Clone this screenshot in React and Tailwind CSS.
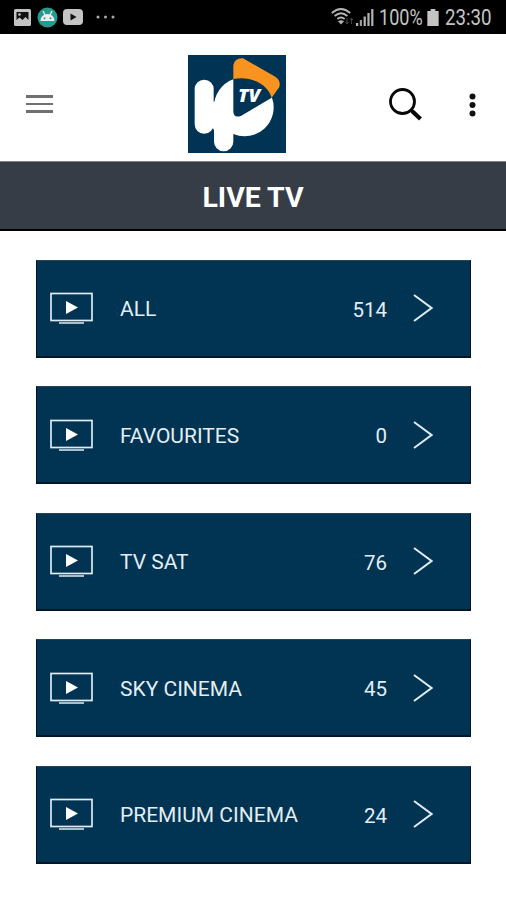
import React from "react";

const categories = [
  { id: 1, name: "ALL", total: 514 },
  { id: 2, name: "FAVOURITES", total: 0 },
  { id: 3, name: "TV SAT", total: 76 },
  { id: 4, name: "SKY CINEMA", total: 45 },
  { id: 5, name: "PREMIUM CINEMA", total: 24 },
];

const StatusBar = () => (
  <div className="flex h-[34px] items-center justify-between bg-black pl-[14px] pr-[14px] text-[#c4c4c4]">
    <div className="flex items-center">
      {/* Picture */}
      <svg width="17" height="17" viewBox="0 0 17 17">
        <rect width="17" height="17" rx="1.5" fill="#c4c4c4" />
        <path d="M2.5 3h12v8l-3-3-3 3-3-2.5-3 2.5z" fill="#111" />
        <circle cx="5.5" cy="5.5" r="1.3" fill="#c4c4c4" />
      </svg>
      {/* Android head */}
      <svg className="ml-[6px]" width="21" height="21" viewBox="0 0 21 21">
        <circle cx="10.5" cy="10.5" r="10" fill="#259a90" />
        <path d="M3.5 14c0-4 3-7 7-7s7 3 7 7z" fill="#eee" />
        <path d="M6 4l2 4M15 4l-2 4" stroke="#eee" strokeWidth="1.3" />
        <circle cx="7.5" cy="11.3" r="1" fill="#259a90" />
        <circle cx="13.5" cy="11.3" r="1" fill="#259a90" />
      </svg>
      {/* Video */}
      <svg className="ml-[5px]" width="20" height="16" viewBox="0 0 20 16">
        <rect width="20" height="16" rx="4" fill="#c4c4c4" />
        <path d="M7.5 4.5v7l6-3.5z" fill="#111" />
      </svg>
      <svg className="ml-[13px]" width="19" height="4" viewBox="0 0 19 4" fill="#aaa">
        <circle cx="2" cy="2" r="1.5" />
        <circle cx="9.5" cy="2" r="1.5" />
        <circle cx="17" cy="2" r="1.5" />
      </svg>
    </div>

    <div className="flex items-center font-['Roboto',sans-serif] text-[21.5px] leading-none">
      <svg className="mb-[2px]" width="23" height="19" viewBox="0 0 23 19" fill="none" stroke="#b4b4b4" strokeWidth="1.9">
        <path d="M.8 6Q10 -2 19.2 6" />
        <path d="M3.6 9Q10 3.4 16.4 9" />
        <path d="M6.3 12Q10 9 13.7 12" />
        <path d="M10 17.5l-3-3.3q3-2 6 0z" fill="#b4b4b4" stroke="none" />
        <path d="M16 11v6M14.5 15l1.5 2 1.5-2M20.5 17v-6M19 13l1.5-2 1.5 2" stroke="#444" strokeWidth="1" />
      </svg>
      <svg className="ml-[2px]" width="18" height="17" viewBox="0 0 18 17" fill="#b4b4b4">
        <rect x="0" y="14" width="2.2" height="3" />
        <rect x="3.8" y="11" width="2.2" height="6" fill="#999" />
        <rect x="7.6" y="7.5" width="2.2" height="9.5" />
        <rect x="11.4" y="4" width="2.2" height="13" />
        <rect x="15.2" y="0" width="2.2" height="17" />
      </svg>
      <span className="ml-[5px] mt-[2px] w-[44px] whitespace-nowrap">
        <span className="inline-block origin-left scale-x-[0.84]">100%</span>
      </span>
      <svg className="ml-[4px]" width="12" height="17" viewBox="0 0 12 18" fill="#c4c4c4">
        <path d="M3.5 0h5v2H12v16H0V2h3.5z" />
      </svg>
      <span className="ml-[6px] mt-[2px] w-[47px] whitespace-nowrap">
        <span className="inline-block origin-left scale-x-[0.87]">23:30</span>
      </span>
    </div>
  </div>
);

const Logo = () => (
  <svg width="98" height="98" viewBox="22 22 294 294">
    <rect x="22" y="22" width="294" height="294" fill="#003354" />
    <rect x="42" y="96" width="57" height="162" rx="28" fill="#fff" />
    <path d="M85 162H112V250H101L97 242H85Z" fill="#fff" />
    <path
      d="M158 95A88 88 0 0 0 100 178V282A29 29 0 0 0 158 282V259A87 87 0 0 0 274 150L158 95Z"
      fill="#fff"
    />
    <path
      d="M158 92V192Q160 213 182 204L273 150C262 112 215 84 158 92Z"
      fill="#003354"
    />
    <path
      d="M158 94V52Q163 30 187 32L284 87Q301 98 296 118L273 150C262 112 215 84 158 94Z"
      fill="#f7931e"
    />
    <text
      x="172"
      y="164"
      fill="#fff"
      className="font-['Open_Sans',sans-serif] text-[55px] font-extrabold italic"
      textLength="67"
      lengthAdjust="spacingAndGlyphs"
    >
      TV
    </text>
  </svg>
);

const Header = () => (
  <header className="flex h-[127px] items-center bg-white pl-[26px] pr-[30px] pt-[13px]">
    <button className="flex w-[27px] flex-col gap-[5px]" aria-label="Menu">
      <span className="h-[2.5px] w-full bg-[#707070]" />
      <span className="h-[2.5px] w-full bg-[#707070]" />
      <span className="h-[2.5px] w-full bg-[#707070]" />
    </button>
    <div className="ml-[134.5px]">
      <Logo />
    </div>
    <button className="ml-auto mt-[1px]" aria-label="Search">
      <svg width="34" height="34" viewBox="0 0 34 34" fill="none" stroke="#080808">
        <circle cx="13.5" cy="13.5" r="12" strokeWidth="2.8" />
        <path d="M22 22l2 2" strokeWidth="3" />
        <path d="M23 23l8.500 8" strokeWidth="4.200" />
      </svg>
    </button>
    <button className="ml-[46px] mt-[1px]" aria-label="More options">
      <svg width="7" height="24" viewBox="0 0 7 24" fill="#111">
        <circle cx="3.5" cy="3.5" r="3" />
        <circle cx="3.5" cy="12" r="3" />
        <circle cx="3.5" cy="20.5" r="3" />
      </svg>
    </button>
  </header>
);

const CategoryRow = ({ category }) => (
  <button className="flex h-[98px] w-full items-center border border-b-2 border-[#001525] border-t-[#24445a] bg-[#003452] pl-[13px] pr-[37px] text-left font-['Roboto',sans-serif] text-[21px] text-[#e4edf2]">
    <svg width="43" height="32" viewBox="0 0 43 32">
      <rect x="1" y="1.5" width="41" height="27" fill="none" stroke="#dfeaf2" strokeWidth="1.7" />
      <path d="M9 31h25" stroke="#c4d6e2" strokeWidth="1.7" />
      <path d="M16 9v13l12-6.5z" fill="#fff" />
    </svg>
    <span className="ml-[27px] flex-1 pt-[4px]">{category.name}</span>
    <span className="pt-[4px] text-[20.5px]">{category.total}</span>
    <svg className="ml-[26px]" width="20" height="28" viewBox="0 0 20 28" fill="none" stroke="#dfeaf2" strokeWidth="2">
      <path d="M1 1l17.5 13L1 27" />
    </svg>
  </button>
);

const App = () => {
  return (
    <div className="flex h-[900px] w-[506px] flex-col overflow-hidden bg-white">
      <StatusBar />
      <Header />
      <div className="flex h-[70px] items-center justify-center border-b-2 border-t border-b-black border-t-[#7b8086] bg-[#363d47] pt-[5px]">
        <h1 className="font-['Roboto',sans-serif] text-[28.5px] font-bold text-white">
          LIVE TV
        </h1>
      </div>
      <main className="flex flex-col gap-[28.5px] pl-[36px] pr-[35px] pt-[28.5px]">
        {categories.map((category) => (
          <CategoryRow key={category.id} category={category} />
        ))}
      </main>
    </div>
  );
};

export default App;
